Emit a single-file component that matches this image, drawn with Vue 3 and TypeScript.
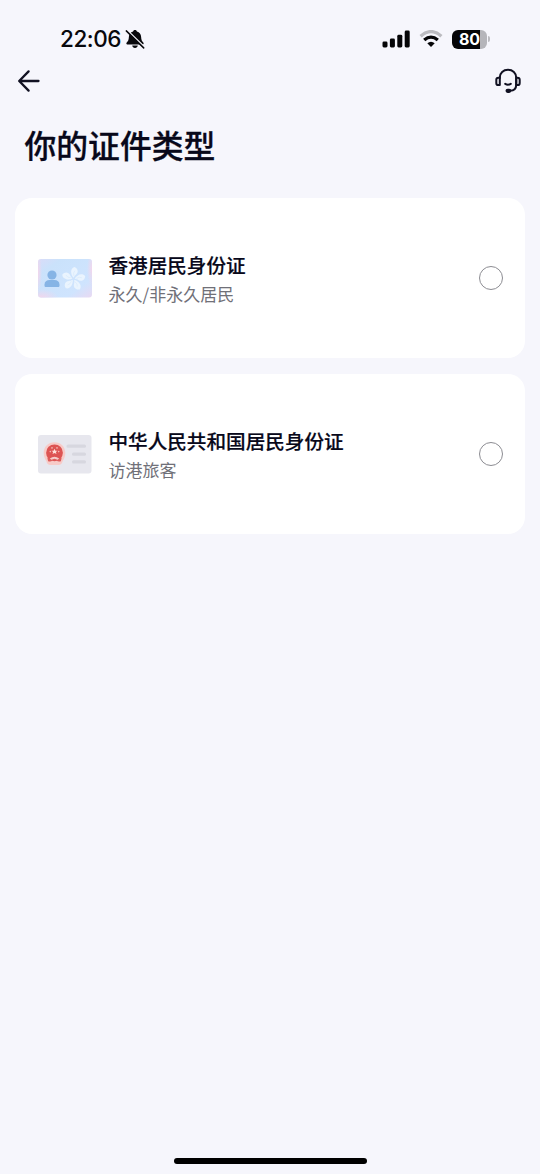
<script setup lang="ts">
import { ref } from 'vue'

interface DocumentOption {
  id: 'hk' | 'cn'
  title: string
  note: string
}

const options: DocumentOption[] = [
  { id: 'hk', title: '香港居民身份证', note: '永久/非永久居民' },
  { id: 'cn', title: '中华人民共和国居民身份证', note: '访港旅客' },
]
const selected = ref<string | null>(null)
const petals = [8, 80, 152, 224, 296]
</script>

<template>
  <main class="screen">
    <header class="status">
      <div class="clock">
        <span class="time">22:06</span>
        <svg class="bell" width="20" height="20" viewBox="0 0 20 20">
          <path d="M10 1C11 1 11.700 1.600 11.900 2.400C14.600 3.200 16 5.200 16.100 7.800C16.200 11 17 12.400 18.300 13.600C19 14.400 18.700 15.500 17.600 15.500H2.400C1.300 15.500 1 14.400 1.700 13.600C3 12.400 3.800 11 3.900 7.800C4 5.200 5.400 3.200 8.100 2.400C8.300 1.600 9 1 10 1ZM7.200 16.600H12.800C12.600 18.100 11.500 19 10 19S7.400 18.100 7.200 16.600Z" fill="#08080c" />
          <path d="M2.300 1.300 19 17.600" stroke="#f6f6fc" stroke-width="1.600" />
          <path d="M1.300 1.900 18.700 18.900" stroke="#08080c" stroke-width="1.500" stroke-linecap="round" />
        </svg>
      </div>
      <div class="indicators">
        <svg width="28" height="18" viewBox="0 0 28 18" fill="#050507">
          <rect x="0.500" y="11.500" width="5" height="6" rx="1.400" />
          <rect x="7.900" y="8.500" width="5" height="9" rx="1.400" />
          <rect x="15.300" y="4.800" width="5" height="12.700" rx="1.400" />
          <rect x="22.700" y="0.500" width="5" height="17" rx="1.400" />
        </svg>
        <svg class="wifi" width="24" height="18" viewBox="0 0 24 18" fill="none">
          <path d="M1.600 6.200Q12-3 22.400 6.200" stroke="#bbbbc0" stroke-width="3.300" />
          <path d="M5.200 10Q12 4.200 18.800 10" stroke="#050507" stroke-width="3.300" />
          <path d="M8.300 13.200Q12 10.100 15.700 13.200L12 17z" fill="#050507" />
        </svg>
        <div class="battery"><span class="charge">80</span></div>
        <span class="battery-tip"></span>
      </div>
    </header>

    <nav class="nav">
      <button class="icon-button" aria-label="返回">
        <svg width="24" height="24" viewBox="0 0 24 24" fill="none" stroke="#111122" stroke-width="2.300" stroke-linecap="round" stroke-linejoin="round">
          <path d="M21.500 12H2.400M11.600 2.400 2.200 12l9.400 9.600" />
        </svg>
      </button>
      <button class="icon-button" aria-label="客服">
        <svg width="28" height="28" viewBox="0 0 28 28" fill="none" stroke="#111122" stroke-width="2" stroke-linecap="round" stroke-linejoin="round">
          <path d="M5.800 11V10.500C5.800 5.800 9.300 2.800 14 2.800s8.200 3 8.200 7.700v7.200c0 3.700-2.500 5.900-6.200 6.100" />
          <path d="M5.800 10.700H4.500c-1.400 0-2.200.8-2.200 2.100v3.100c0 1.400.8 2.200 2.200 2.200h1.300zM22.200 10.700h1.300c1.400 0 2.200.8 2.200 2.100v3.100c0 1.400-.8 2.200-2.200 2.200h-1.300z" />
          <path d="M11.200 16.800q2.800 1.800 5.600 0" />
          <rect x="12.500" y="22.700" width="3.800" height="2.200" rx="1.100" fill="#111122" />
        </svg>
      </button>
    </nav>

    <h1 class="heading">你的证件类型</h1>

    <section class="options">
      <label v-for="option in options" :key="option.id" class="card">
        <svg v-if="option.id === 'hk'" class="document" width="54" height="39" viewBox="0 0 54 39">
          <defs>
            <linearGradient id="hk-base" x1="0" y1="0" x2="1" y2="1">
              <stop offset="0" stop-color="#dadcf8" />
              <stop offset=".22" stop-color="#cae2fb" />
              <stop offset=".75" stop-color="#cfe4fe" />
              <stop offset="1" stop-color="#ead9f2" />
            </linearGradient>
            <radialGradient id="hk-glow">
              <stop offset="0" stop-color="#f3d6ec" />
              <stop offset="1" stop-color="#f3d6ec" stop-opacity="0" />
            </radialGradient>
            <clipPath id="hk-clip"><rect width="54" height="38.500" rx="3" /></clipPath>
          </defs>
          <g clip-path="url(#hk-clip)">
            <rect width="54" height="39" fill="url(#hk-base)" />
            <ellipse cx="3" cy="39" rx="18" ry="9" fill="url(#hk-glow)" />
            <ellipse cx="54" cy="10" rx="5" ry="18" fill="url(#hk-glow)" />
            <ellipse cx="0" cy="14" rx="4" ry="20" fill="url(#hk-glow)" />
          </g>
          <circle cx="14" cy="16" r="4.600" fill="#86b4e5" />
          <path d="M6.500 25.500c0-3 2.200-4.500 5-4.500h5c2.800 0 5 1.500 5 4.500v1c0 1-.6 1.500-1.500 1.500H8c-.9 0-1.500-.5-1.500-1.500z" fill="#86b4e5" />
          <g transform="translate(35.500 20)">
            <g v-for="angle in petals" :key="angle" :transform="`rotate(${angle})`">
              <path d="M0-1.200C-3.200-3.500-5.200-9.500-1-12 2.800-11.400 4.400-7.500 2-4.800 1-3.700.4-2.800 0-1.200z" fill="#eaf4fe" />
              <path d="M0-3Q-1.600-6 .2-8.500" fill="none" stroke="#d3e6f9" stroke-width=".5" />
            </g>
          </g>
        </svg>
        <svg v-else class="document" width="54" height="39" viewBox="0 0 54 39">
          <rect width="53.500" height="38.500" rx="3" fill="#e7e7ee" />
          <path d="M16.500 7.200c6.300 0 10.800 4.600 10.800 10.600 0 3.300-1 6-2.600 8.200-.6 2.900-2.200 4.200-4.700 4h-7c-2.500.2-4.100-1.100-4.700-4-1.600-2.200-2.600-4.900-2.600-8.200 0-6 4.500-10.600 10.800-10.600z" fill="#f7cbc8" />
          <circle cx="16.500" cy="17.800" r="8.400" fill="#dd5453" />
          <path d="m16.500 13.800.9 2h2.100l-1.600 1.300.6 2-2-1.100-2 1.100.6-2-1.600-1.300h2.100z" fill="#ffe0da" />
          <g fill="#f3bdb7">
            <circle cx="12.300" cy="16.600" r=".8" /><circle cx="14" cy="12.900" r=".8" />
            <circle cx="19" cy="12.900" r=".8" /><circle cx="20.700" cy="16.600" r=".8" />
          </g>
          <path d="M9.300 22.500q7.200 3 14.400 0l-.8 3.800q-3.200.8-4.200-1h-4.400q-1 1.800-4.200 1z" fill="#dd5d5b" />
          <path d="M11.800 23.400q4.700-3.400 9.400 0l-1.600 1.300-3.100-1-3.100 1z" fill="#f6cdca" />
          <g fill="#d7d7df">
            <rect x="28.500" y="9.500" width="19.500" height="3.300" rx="1.600" />
            <rect x="34" y="17.500" width="14" height="3.300" rx="1.600" />
            <rect x="34" y="25.200" width="14" height="3.300" rx="1.600" />
          </g>
        </svg>
        <span class="copy">
          <span class="title">{{ option.title }}</span>
          <span class="note">{{ option.note }}</span>
        </span>
        <input v-model="selected" class="radio" type="radio" name="document" :value="option.id" />
      </label>
    </section>

    <div class="home-indicator"></div>
  </main>
</template>

<style>
body {
  margin: 0;
  background: #f6f6fc;
}
</style>

<style scoped>
.screen {
  box-sizing: border-box;
  display: flex;
  flex-direction: column;
  width: 540px;
  height: 1174px;
  padding-bottom: 10px;
  background: #f6f6fc;
  color: #08081a;
  font-family: "Noto Sans CJK SC", sans-serif;
}
.status {
  display: flex;
  align-items: center;
  justify-content: space-between;
  height: 34px;
  padding: 22px 50px 0 60px;
}
.clock,
.indicators {
  display: flex;
  align-items: center;
}
.time {
  font: 500 22.500px/34px Inter, sans-serif;
  letter-spacing: -0.450px;
  color: #08080c;
}
.bell {
  margin-left: 4px;
}
.wifi {
  margin-left: 9px;
}
.battery {
  display: flex;
  align-items: center;
  justify-content: center;
  width: 35px;
  height: 19px;
  margin-left: 9px;
  border-radius: 6px;
  background: linear-gradient(90deg, #050507 80%, #b5b5ba 80%);
}
.charge {
  font: 700 16px/19px Inter, sans-serif;
  color: #fff;
}
.battery-tip {
  width: 2px;
  height: 6px;
  margin-left: 1px;
  border-radius: 0 2px 2px 0;
  background: #bbbbc0;
}
.nav {
  display: flex;
  align-items: center;
  justify-content: space-between;
  height: 50px;
  padding: 0 18px 0 17px;
}
.icon-button {
  display: flex;
  padding: 0;
  border: 0;
  background: none;
}
.heading {
  margin: 14px 0 0 24.500px;
  font-size: 31.800px;
  font-weight: 500;
  line-height: 48px;
  -webkit-text-stroke: 0.300px currentColor;
}
.options {
  display: grid;
  gap: 16px;
  padding: 30px 15px 0;
}
.card {
  box-sizing: border-box;
  display: flex;
  align-items: center;
  height: 160px;
  padding: 0 22px 0 23px;
  border-radius: 17px;
  background: #fff;
}
.document {
  flex: none;
}
.copy {
  display: flex;
  flex: 1;
  flex-direction: column;
  padding-top: 2px;
  margin-left: 16.500px;
}
.title {
  font-size: 19.600px;
  font-weight: 500;
  line-height: 30px;
  -webkit-text-stroke: 0.200px currentColor;
}
.note {
  font-size: 17px;
  line-height: 28px;
  color: #707078;
}
.radio {
  appearance: none;
  box-sizing: border-box;
  width: 24px;
  height: 24px;
  margin: 0;
  border: 1px solid #8c8c92;
  border-radius: 50%;
}
.radio:checked {
  border: 7px solid #08081a;
}
.home-indicator {
  width: 193px;
  height: 6px;
  margin: auto auto 0;
  border-radius: 3px;
  background: #000;
}
</style>
